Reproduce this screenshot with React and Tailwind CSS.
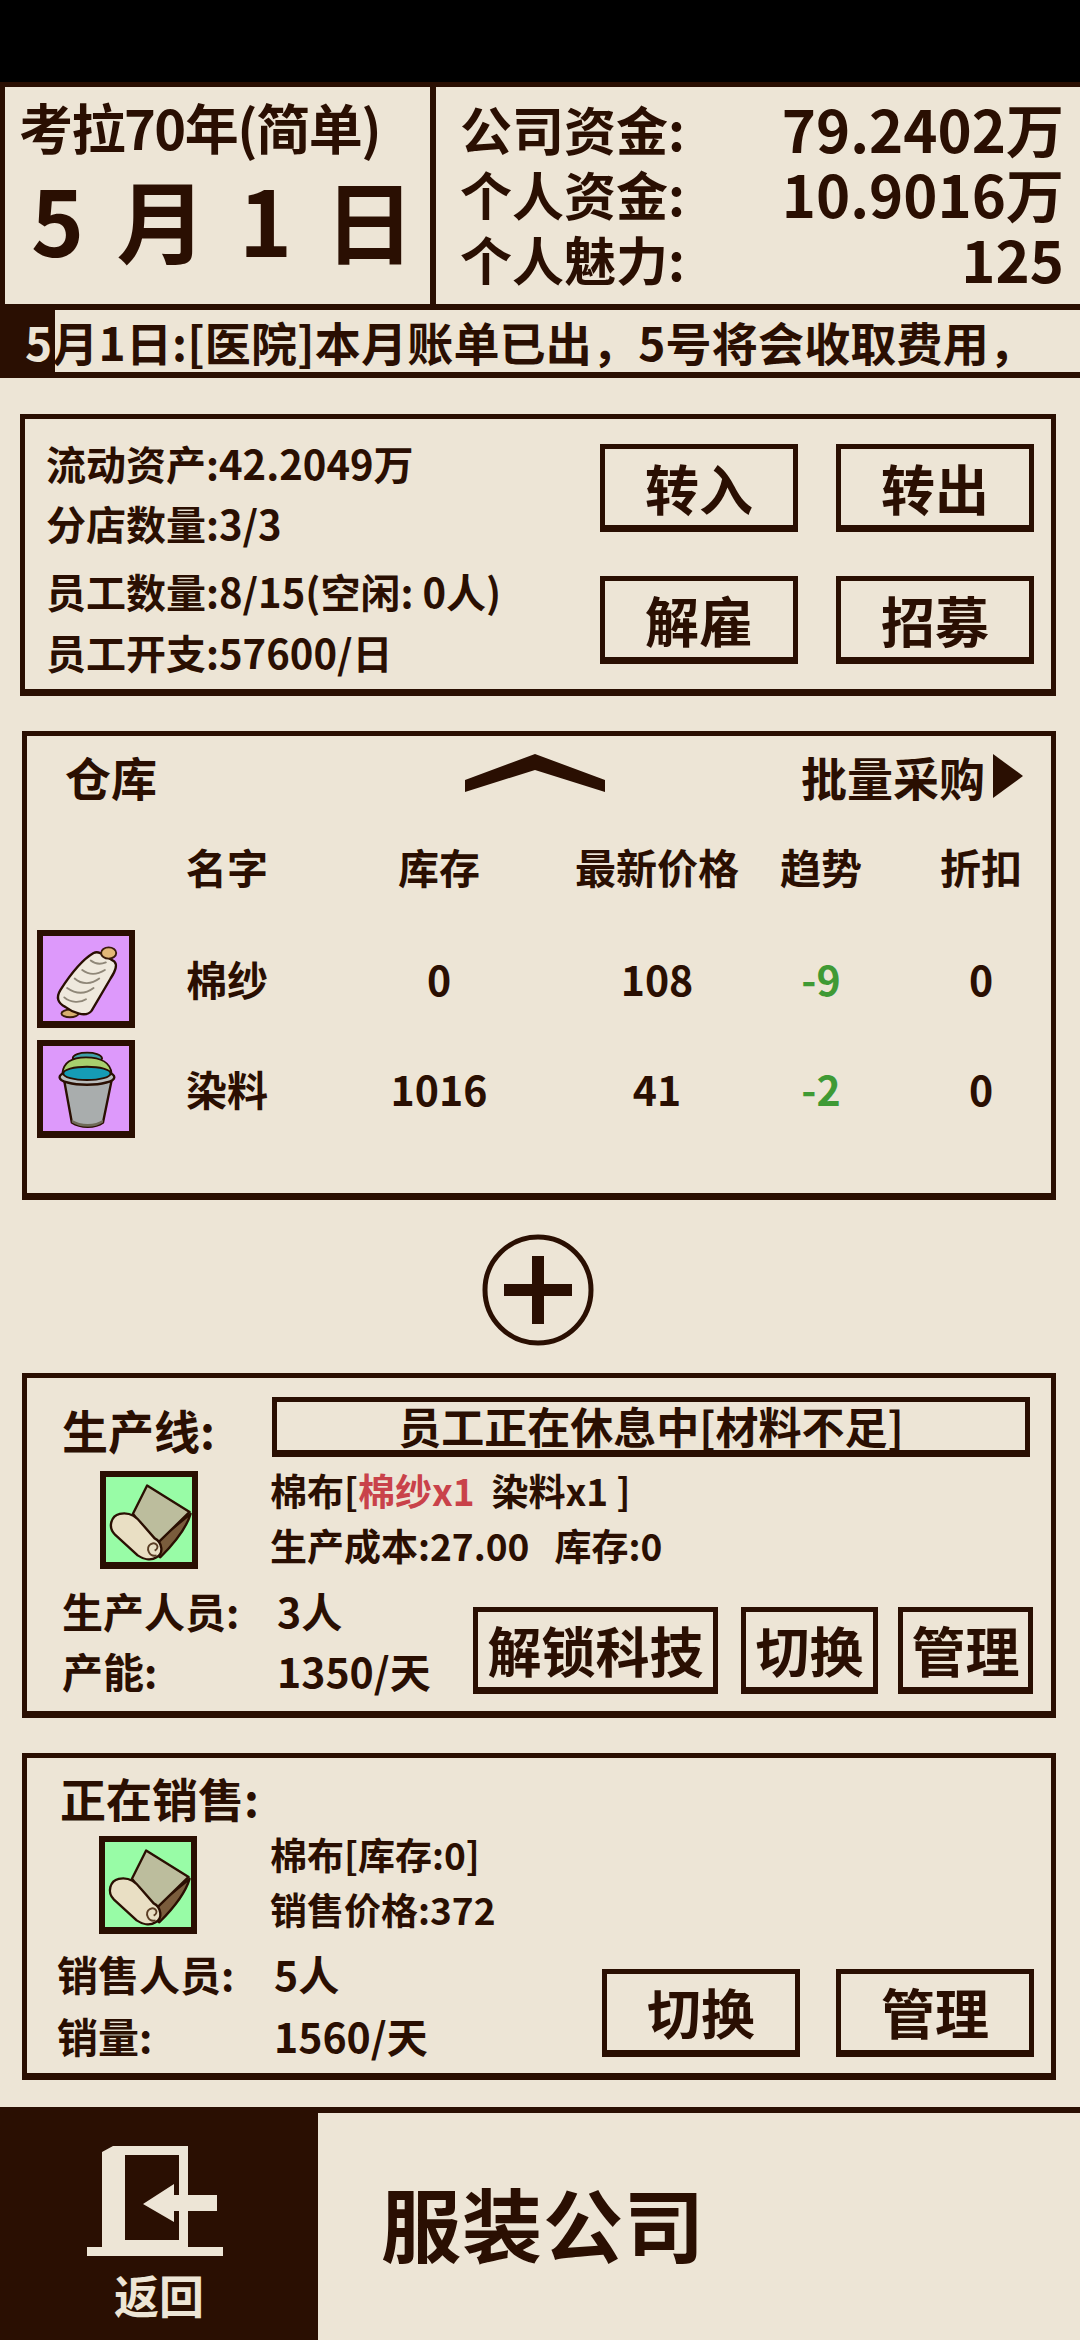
import React from "react";

const Btn = ({ children, className = "" }) => (
  <div
    className={`flex items-center justify-center border-[5px] border-b-[7px] border-[#2a0f02] font-bold ${className}`}
  >
    {children}
  </div>
);

const Panel = ({ children, className = "" }) => (
  <section className={`border-[5px] border-b-[7px] border-[#2a0f02] ${className}`}>{children}</section>
);

const IconBox = ({ bg, children }) => (
  <div className={`w-[98px] h-[98px] shrink-0 border-[6px] border-b-[7px] border-[#2a0f02] ${bg}`}>
    <svg viewBox="5 5 90 90" className="w-full h-full">
      {children}
    </svg>
  </div>
);

const Yarn = () => (
  <IconBox bg="bg-[#dd99fb]">
    <ellipse cx="33" cy="87" rx="9" ry="4" fill="#d8b070" stroke="#3a1c0c" strokeWidth="2" />
    <path
      d="M58 23C64 20 70 26 80 32C84 36 80 44 76 50L56 84C50 92 36 86 28 80C20 76 18 70 23 62C32 48 46 30 58 23Z"
      fill="#efe9dd"
      stroke="#2a0f02"
      strokeWidth="2.5"
      strokeLinejoin="round"
    />
    <ellipse cx="74" cy="23" rx="8" ry="6" fill="#e3b878" stroke="#3a1c0c" strokeWidth="2" />
    <g fill="none" stroke="#8f8778" strokeWidth="2" strokeLinecap="round">
      <path d="M55 31C60 35 66 35 71 33" />
      <path d="M46 41C54 47 62 46 70 41" />
      <path d="M38 50C46 57 56 56 64 50" />
      <path d="M30 60C40 67 50 66 58 60" />
      <path d="M27 70C34 76 44 76 50 72" />
    </g>
  </IconBox>
);

const Bucket = () => (
  <IconBox bg="bg-[#dd99fb]">
    <path d="M36 18C36 10 66 10 67 18L64 24H39Z" fill="#3fa0a8" stroke="#2a0f02" strokeWidth="2" />
    <path d="M25 34C26 22 36 17 50 17C66 17 76 23 77 34Z" fill="#a8cf6e" stroke="#2a0f02" strokeWidth="2" />
    <path d="M27 42L35 86C44 92 60 92 68 86L77 42Z" fill="#a9adad" stroke="#2a0f02" strokeWidth="2.5" />
    <path d="M35 83C44 89 60 89 68 83L68 86C60 92 44 92 35 86Z" fill="#6f6a58" />
    <ellipse cx="51" cy="38" rx="29" ry="8" fill="#b9bdbd" stroke="#2a0f02" strokeWidth="2.5" />
    <ellipse cx="51" cy="34" rx="25" ry="7" fill="#159cb6" stroke="#2a0f02" strokeWidth="2" />
  </IconBox>
);

const Scroll = () => (
  <IconBox bg="bg-[#98fca6]">
    <path d="M94 44C90 58 76 76 62 90L50 80Z" fill="#7a5c3c" stroke="#2a0f02" strokeWidth="2.5" strokeLinejoin="round" />
    <path d="M48 14L93 42L58 76L33 44Z" fill="#bcbd9d" stroke="#2a0f02" strokeWidth="2.5" strokeLinejoin="round" />
    <path
      d="M19 44C28 42 36 46 42 54L56 70C64 74 66 86 58 90C52 94 44 92 38 88L14 66C6 58 10 46 19 44Z"
      fill="#e9dfc4"
      stroke="#2a0f02"
      strokeWidth="2.5"
      strokeLinejoin="round"
    />
    <path d="M58 88C50 90 46 80 52 76C58 73 62 80 56 83" fill="none" stroke="#5a3d24" strokeWidth="2" />
  </IconBox>
);

const tableCells = [
  "w-[100px] text-center",
  "ml-[64px] w-[196px] text-center",
  "w-[240px] text-center",
  "w-[88px] text-center",
  "ml-[56px] w-[120px] text-center",
];

const TableRow = ({ icon, values, className = "" }) => (
  <div className={`flex items-center font-bold ${className}`}>
    <div className="w-[150px] pl-[10px]">{icon}</div>
    {values.map((v, i) => (
      <div key={i} className={`${tableCells[i]} ${i === 3 && icon ? "text-[#3f9a35]" : ""}`}>
        {v}
      </div>
    ))}
  </div>
);

export default function App() {
  return (
    <div className="w-[1080px] h-[2340px] flex flex-col overflow-hidden bg-[#ede5d6] text-[#2a0f02] font-['Noto_Sans_CJK_SC','Noto_Sans',sans-serif]">
      <div className="h-[82px] shrink-0 bg-black" />

      {/* header */}
      <header className="flex h-[228px] shrink-0 border-y-[5px] border-b-[6px] border-[#2a0f02] border-l-[5px]">
        <div className="w-[431px] shrink-0 border-r-[6px] border-[#2a0f02] pl-[14px]">
          <div className="mt-[10px] text-[54px] leading-[60px] font-bold tracking-[-1.5px] whitespace-nowrap">
            考拉70年(简单)
          </div>
          <div className="mt-[11px] text-[90px] leading-[100px] font-bold tracking-[6px] whitespace-nowrap pl-[12px]">
            5 月 1 日
          </div>
        </div>
        <div className="flex-1 pl-[24px] pr-[16px] pt-[9px] text-[52px] leading-[65px] font-bold">
          <div className="flex justify-between">
            <span>公司资金:</span>
            <span className="text-[58px]">79.2402万</span>
          </div>
          <div className="flex justify-between">
            <span>个人资金:</span>
            <span className="text-[58px]">10.9016万</span>
          </div>
          <div className="flex justify-between">
            <span>个人魅力:</span>
            <span className="text-[58px]">125</span>
          </div>
        </div>
      </header>

      {/* ticker */}
      <div className="relative h-[68px] shrink-0 border-b-[6px] border-[#2a0f02]">
        <div className="absolute left-0 top-0 w-[55px] h-full bg-[#2a0f02]" />
        <div className="relative pl-[25px] text-[46px] leading-[62px] font-bold tracking-[0.2px] whitespace-nowrap">
          <span className="text-[#ede5d6]">5</span>月1日:[医院]本月账单已出，5号将会收取费用，
        </div>
      </div>

      {/* company stats */}
      <Panel className="mt-[36px] mx-[20px] w-[1036px] h-[282px] flex">
        <div className="w-[575px] pl-[21px] text-[40px] leading-[50px] font-bold whitespace-nowrap">
          <div className="mt-[19px]">流动资产:42.2049万</div>
          <div className="mt-[10px]">分店数量:3/3</div>
          <div className="mt-[18px]">员工数量:8/15(空闲: 0人)</div>
          <div className="mt-[11px]">员工开支:57600/日</div>
        </div>
        <div className="mt-[25px] grid grid-cols-[198px_198px] gap-x-[38px] gap-y-[44px] text-[54px] h-fit">
          <Btn className="h-[88px]">转入</Btn>
          <Btn className="h-[88px]">转出</Btn>
          <Btn className="h-[88px]">解雇</Btn>
          <Btn className="h-[88px]">招募</Btn>
        </div>
      </Panel>

      {/* warehouse */}
      <Panel className="mt-[35px] ml-[22px] w-[1034px] h-[469px]">
        <div className="flex items-center h-[64px] mt-[8px] text-[46px] font-bold">
          <span className="ml-[38px] w-[400px]">仓库</span>
          <svg viewBox="0 0 140 38" className="w-[140px] h-[38px] mb-[6px]">
            <path d="M0 26L70 0L140 26V38L70 16L0 38Z" fill="#2a0f02" />
          </svg>
          <span className="ml-[196px] flex items-center whitespace-nowrap">
            批量采购
            <svg viewBox="0 0 30 44" className="ml-[8px] w-[30px] h-[44px]">
              <path d="M0 0L30 22L0 44Z" fill="#2a0f02" />
            </svg>
          </span>
        </div>
        <TableRow className="mt-[29px] h-[60px] text-[41px]" values={["名字", "库存", "最新价格", "趋势", "折扣"]} />
        <TableRow className="mt-[33px] h-[98px] text-[41px]" icon={<Yarn />} values={["棉纱", "0", "108", "-9", "0"]} />
        <TableRow className="mt-[12px] h-[98px] text-[41px]" icon={<Bucket />} values={["染料", "1016", "41", "-2", "0"]} />
      </Panel>

      {/* add line */}
      <div className="h-[173px] shrink-0 flex items-center justify-center pt-[6px]">
        <svg viewBox="0 0 112 112" className="w-[112px] h-[112px] ml-[-4px]">
          <circle cx="56" cy="56" r="53" fill="none" stroke="#2a0f02" strokeWidth="5" />
          <path d="M22 56H90M56 22V90" stroke="#2a0f02" strokeWidth="12" />
        </svg>
      </div>

      {/* production line */}
      <Panel className="ml-[22px] w-[1034px] h-[345px] font-bold">
        <div className="flex items-center mt-[17px]">
          <span className="ml-[35px] w-[210px] text-[46px]">生产线:</span>
          <div className="mb-[6px] w-[758px] h-[60px] flex items-center justify-center border-[5px] border-b-[7px] border-[#2a0f02] text-[43px] leading-none">
            员工正在休息中[材料不足]
          </div>
        </div>
        <div className="flex mt-[7px]">
          <div className="ml-[73px]">
            <Scroll />
          </div>
          <div className="ml-[72px] text-[37px] leading-[48px] whitespace-pre">
            <div className="mt-[-5px]">
              棉布[<span className="text-[#c9424a]">棉纱x1</span>  染料x1 ]
            </div>
            <div className="mt-[7px]">生产成本:27.00   库存:0</div>
          </div>
        </div>
        <div className="flex mt-[16px]">
          <div className="w-[411px] ml-[35px] shrink-0 text-[41px] leading-[50px] whitespace-nowrap">
            <div className="flex">
              <span className="w-[215px]">生产人员:</span>3人
            </div>
            <div className="flex mt-[10px]">
              <span className="w-[215px]">产能:</span>1350/天
            </div>
          </div>
          <div className="mt-[22px] flex text-[54px] leading-none">
            <Btn className="w-[245px] h-[87px] whitespace-nowrap">解锁科技</Btn>
            <Btn className="ml-[23px] w-[137px] h-[87px] whitespace-nowrap">切换</Btn>
            <Btn className="ml-[20px] w-[135px] h-[87px] whitespace-nowrap">管理</Btn>
          </div>
        </div>
      </Panel>

      {/* sales */}
      <Panel className="mt-[35px] ml-[22px] w-[1034px] h-[327px] font-bold">
        <div className="mt-[12px] ml-[33px] text-[46px] leading-[54px]">正在销售:</div>
        <div className="flex mt-[12px]">
          <div className="ml-[72px]">
            <Scroll />
          </div>
          <div className="ml-[73px] mt-[-6px] text-[37px] leading-[48px] whitespace-nowrap">
            <div>棉布[库存:0]</div>
            <div className="mt-[7px]">销售价格:372</div>
          </div>
        </div>
        <div className="flex mt-[14px]">
          <div className="w-[545px] ml-[30px] shrink-0 text-[41px] leading-[50px] whitespace-nowrap">
            <div className="flex">
              <span className="w-[217px]">销售人员:</span>5人
            </div>
            <div className="flex mt-[12px]">
              <span className="w-[217px]">销量:</span>1560/天
            </div>
          </div>
          <div className="mt-[21px] flex gap-[36px] text-[54px] leading-none">
            <Btn className="w-[198px] h-[88px]">切换</Btn>
            <Btn className="w-[198px] h-[88px]">管理</Btn>
          </div>
        </div>
      </Panel>

      {/* footer */}
      <footer className="mt-auto h-[233px] shrink-0 flex border-t-[6px] border-[#2a0f02]">
        <div className="w-[318px] bg-[#2a0f02] flex flex-col items-center text-[#ede5d6]">
          <svg viewBox="0 0 136 112" className="w-[136px] h-[112px] mt-[32px] mr-[8px] fill-[#ede5d6]">
            <path fillRule="evenodd" d="M15 102V7L26 1H101V102ZM38 10V95H92V10Z" />
            <rect x="0" y="102" width="136" height="9" />
            <path d="M56 59L87 39V50H130V66H87V77Z" />
          </svg>
          <span className="mt-[12px] text-[45px] leading-[52px] font-bold">返回</span>
        </div>
        <div className="pl-[63px] pt-[58px] text-[80px] leading-[100px] font-bold tracking-[1px]">服装公司</div>
      </footer>
    </div>
  );
}
